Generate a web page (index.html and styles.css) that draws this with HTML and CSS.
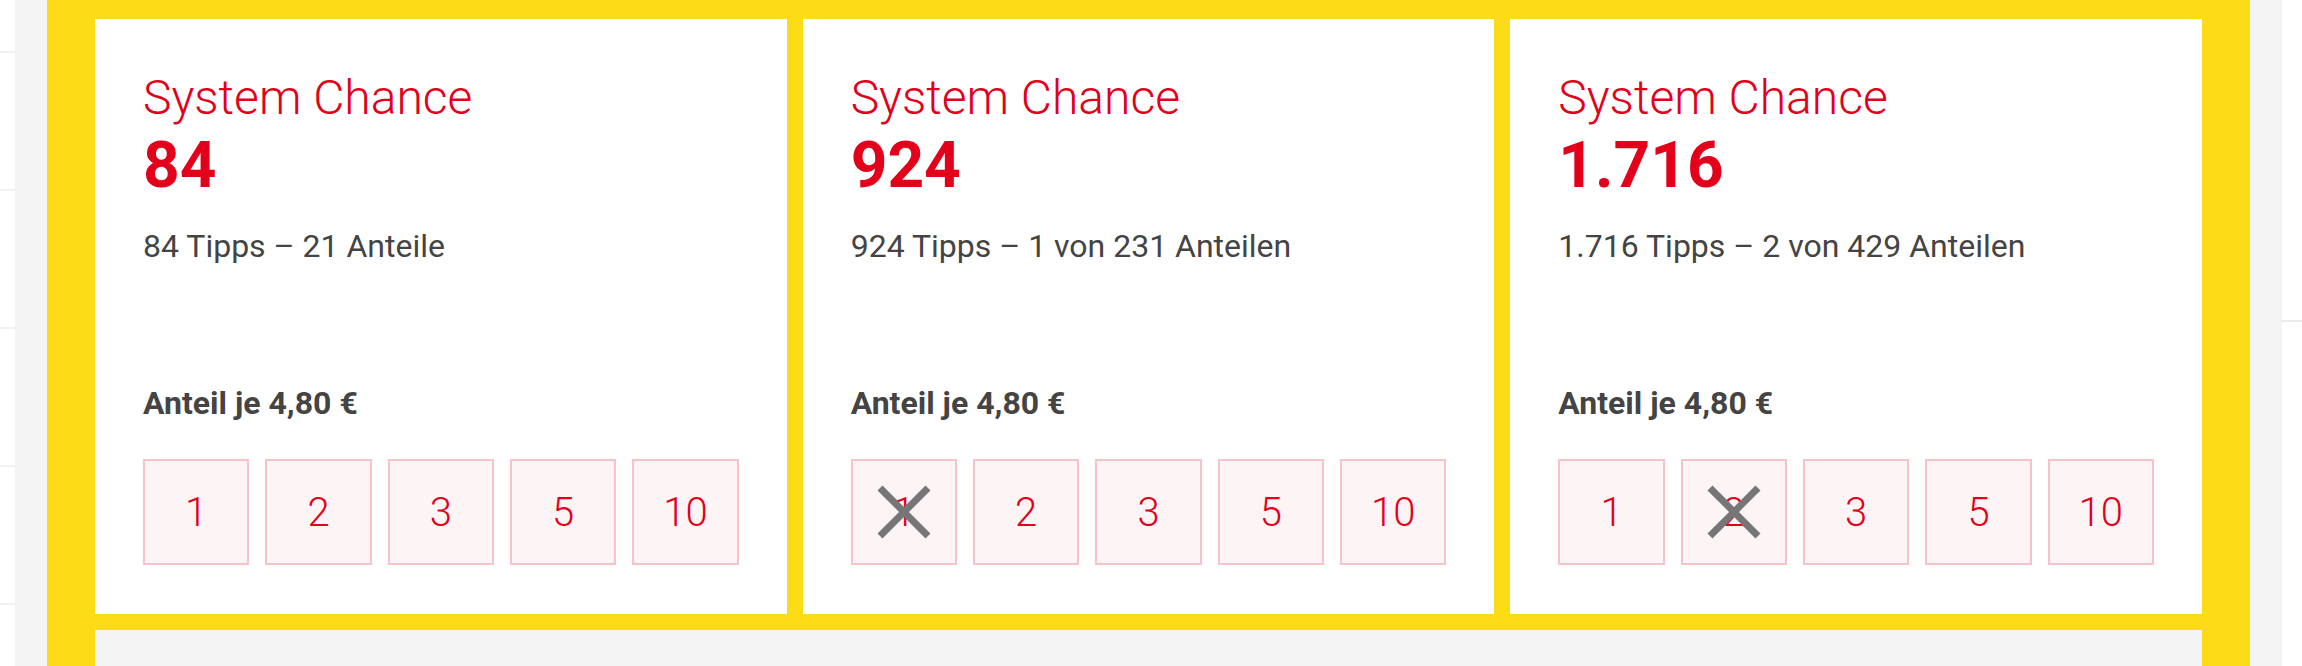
FILE: index.html
```html
<!DOCTYPE html>
<html lang="de">
<head>
    <meta charset="UTF-8">
    <title>System Chance</title>
    <link rel="stylesheet" href="styles.css">
</head>
<body>
    <div class="page">
        <div class="peek peek-left">
            <div class="peek-rows">
                <div class="peek-row"></div>
                <div class="peek-row"></div>
                <div class="peek-row"></div>
                <div class="peek-row"></div>
                <div class="peek-row"></div>
                <div class="peek-row"></div>
            </div>
        </div>

        <div class="stage">
            <section class="panel">
                <div class="cards">
                    <article class="card">
                        <h2 class="card-title">System Chance</h2>
                        <div class="card-count">84</div>
                        <p class="card-info">84 Tipps – 21 Anteile</p>
                        <div class="card-foot">
                            <p class="card-price">Anteil je 4,80 €</p>
                            <div class="shares">
                                <button class="share">1</button>
                                <button class="share">2</button>
                                <button class="share">3</button>
                                <button class="share">5</button>
                                <button class="share">10</button>
                            </div>
                        </div>
                    </article>

                    <article class="card">
                        <h2 class="card-title">System Chance</h2>
                        <div class="card-count">924</div>
                        <p class="card-info">924 Tipps – 1 von 231 Anteilen</p>
                        <div class="card-foot">
                            <p class="card-price">Anteil je 4,80 €</p>
                            <div class="shares">
                                <button class="share taken">1
                                    <svg class="cross" viewBox="0 0 56 56"><line x1="4" y1="4" x2="52" y2="52"/><line x1="52" y1="4" x2="4" y2="52"/></svg>
                                </button>
                                <button class="share">2</button>
                                <button class="share">3</button>
                                <button class="share">5</button>
                                <button class="share">10</button>
                            </div>
                        </div>
                    </article>

                    <article class="card">
                        <h2 class="card-title">System Chance</h2>
                        <div class="card-count">1.716</div>
                        <p class="card-info">1.716 Tipps – 2 von 429 Anteilen</p>
                        <div class="card-foot">
                            <p class="card-price">Anteil je 4,80 €</p>
                            <div class="shares">
                                <button class="share">1</button>
                                <button class="share taken">2
                                    <svg class="cross" viewBox="0 0 56 56"><line x1="4" y1="4" x2="52" y2="52"/><line x1="52" y1="4" x2="4" y2="52"/></svg>
                                </button>
                                <button class="share">3</button>
                                <button class="share">5</button>
                                <button class="share">10</button>
                            </div>
                        </div>
                    </article>
                </div>
                <div class="panel-below"></div>
            </section>
        </div>

        <div class="peek peek-right">
            <div class="peek-top"></div>
        </div>
    </div>
</body>
</html>
```

FILE: styles.css
```css
body {
    margin: 0;
    height: 666px;
    overflow: hidden;
    background: #fff;
    font-family: Roboto, "Liberation Sans", sans-serif;
}

.page {
    display: flex;
    height: 666px;
}

/* neighbouring slides, just peeking in */
.peek {
    background: #fff;
    overflow: hidden;
}

.peek-left {
    width: 15px;
}

.peek-rows {
    margin-top: -85px;
}

.peek-row {
    height: 136px;
    border-bottom: 2px solid #f1f1f1;
}

.peek-right {
    width: 20px;
}

.peek-top {
    height: 320px;
    border-bottom: 2px solid #ebebeb;
}

.stage {
    flex: 1;
    background: #f4f4f4;
    padding: 0 32px;
}

.panel {
    background: #fcdc16;
    height: 100%;
    padding: 19px 48px 0;
    box-sizing: border-box;
}

.cards {
    display: grid;
    grid-template-columns: repeat(3, 1fr);
    gap: 16px;
}

.card {
    background: #fff;
    min-height: 595px;
    box-sizing: border-box;
    padding: 51px 48px 49px;
    display: flex;
    flex-direction: column;
}

.card-title {
    margin: 0;
    font-size: 48px;
    line-height: 56px;
    font-weight: 300;
    color: #e2001a;
}

.card-count {
    margin-top: 5px;
    font-size: 64px;
    line-height: 70px;
    font-weight: 700;
    color: #e2001a;
}

.card-info {
    margin: 25px 0 0;
    font-size: 32px;
    line-height: 40px;
    color: #444;
}

.card-foot {
    margin-top: auto;
}

.card-price {
    margin: 0;
    font-size: 32px;
    line-height: 40px;
    font-weight: 700;
    color: #444;
}

.shares {
    display: flex;
    gap: 16px;
    margin-top: 36px;
}

.share {
    position: relative;
    flex: 1;
    height: 106px;
    border: 2px solid #f8c2ca;
    background: #fdf4f5;
    color: #e2001a;
    font-family: Roboto, "Liberation Sans", sans-serif;
    font-size: 40px;
    font-weight: 300;
    padding: 0;
}

.cross {
    position: absolute;
    left: 50%;
    top: 50%;
    width: 56px;
    height: 56px;
    margin: -28px 0 0 -28px;
    stroke: #767676;
    stroke-width: 7;
}

.panel-below {
    margin-top: 16px;
    height: 80px;
    background: #f4f4f4;
}
```
